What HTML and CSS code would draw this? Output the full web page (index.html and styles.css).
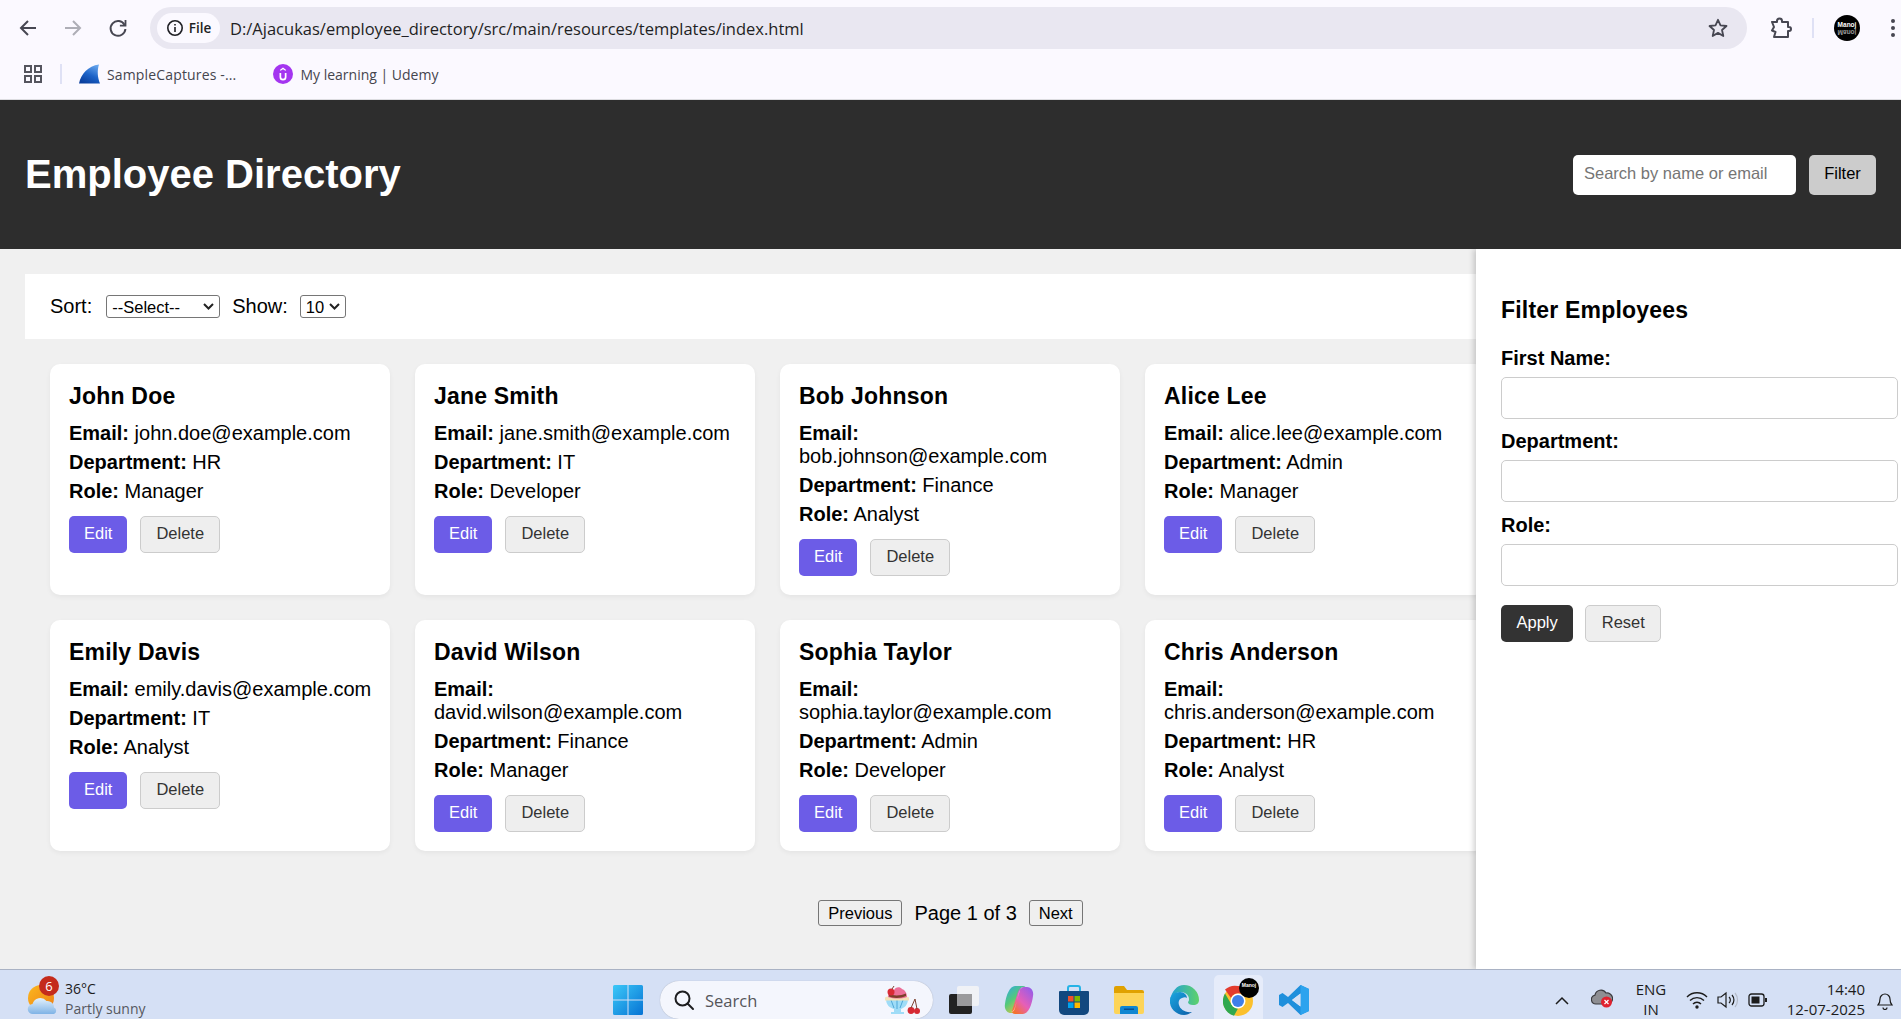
FILE: index.html
```html
<!DOCTYPE html>
<html lang="en">
<head>
  <meta charset="UTF-8">
  <title>Employee Directory</title>
  <link rel="stylesheet" href="styles.css">
</head>
<body>
  <!-- browser toolbar -->
  <div class="browser">
    <div class="nav-row">
      <button class="nav-btn" type="button">
        <svg width="24" height="24" viewBox="0 0 24 24" fill="none" stroke="#474752" stroke-width="2"><path d="M20 12H5M12 5l-7 7 7 7"/></svg>
      </button>
      <button class="nav-btn" type="button">
        <svg width="24" height="24" viewBox="0 0 24 24" fill="none" stroke="#aeaeb6" stroke-width="2"><path d="M4 12h15M12 5l7 7-7 7"/></svg>
      </button>
      <button class="nav-btn" type="button">
        <svg width="24" height="24" viewBox="0 0 24 24" fill="none" stroke="#474752" stroke-width="2"><path d="M18.6 9A7.4 7.4 0 1 0 19.4 13"/><path d="M19.5 4v5.6h-5.6" stroke-width="1.8"/></svg>
      </button>
      <div class="omnibox">
        <span class="site-chip">
          <svg width="18" height="18" viewBox="0 0 18 18" fill="none" stroke="#1f1f24" stroke-width="1.6"><circle cx="9" cy="9" r="7.2"/><path d="M9 8v5M9 5v1.6"/></svg>
          File
        </span>
        <span class="url">D:/Ajacukas/employee_directory/src/main/resources/templates/index.html</span>
        <svg class="star" width="22" height="22" viewBox="0 0 22 22" fill="none" stroke="#474752" stroke-width="1.8" stroke-linejoin="round"><path d="M11 2.800l2.500 5.600 6 .6-4.500 4 1.300 6-5.300-3.100L5.700 19l1.300-6-4.500-4 6-.6z"/></svg>
      </div>
      <svg class="ext" width="24" height="24" viewBox="0 0 24 24" fill="none" stroke="#474752" stroke-width="2" stroke-linejoin="round"><path d="M4 6h5V5a2.500 2.500 0 0 1 5 0v1h6v5h1a2 2 0 0 1 0 4h-1v6H6l1.500-5L4 14.500 6 11z"/></svg>
      <span class="sep-v"></span>
      <svg class="avatar" width="26" height="26" viewBox="0 0 26 26"><circle cx="13" cy="13" r="13" fill="#000"/><text x="13" y="12" text-anchor="middle" class="avatar-text">Manoj</text><text x="13" y="-14.500" text-anchor="middle" class="avatar-text avatar-flip" transform="scale(1,-1)">Manoj</text></svg>
      <svg class="kebab" width="6" height="20" viewBox="0 0 6 20" fill="#474752"><circle cx="3" cy="3" r="2"/><circle cx="3" cy="10" r="2"/><circle cx="3" cy="17" r="2"/></svg>
    </div>
    <div class="bookmarks">
      <svg class="apps-grid" width="20" height="20" viewBox="0 0 20 20" fill="none" stroke="#55555e" stroke-width="2"><rect x="2" y="2" width="6" height="6"/><rect x="12" y="2" width="6" height="6"/><rect x="2" y="12" width="6" height="6"/><rect x="12" y="12" width="6" height="6"/></svg>
      <span class="sep-b"></span>
      <span class="bookmark bookmark-first">
        <svg width="21" height="20" viewBox="0 0 21 20"><defs><linearGradient id="fin" x1="0.8" y1="0" x2="0.3" y2="1"><stop offset="0" stop-color="#6aa8ee"/><stop offset=".55" stop-color="#1c63c8"/><stop offset="1" stop-color="#0a3f9e"/></linearGradient></defs><path d="M0 19.500C2 10 9 2 20 .5c-2 6-1.500 13 1 19z" fill="url(#fin)"/></svg>
        SampleCaptures -...
      </span>
      <span class="bookmark bookmark-second">
        <svg width="20" height="20" viewBox="0 0 20 20"><circle cx="10" cy="10" r="10" fill="#a435f0"/><path d="M6.500 9v4a3.500 3.500 0 0 0 7 0V9h-1.700v4a1.800 1.800 0 0 1-3.600 0V9zM10 3.500L6.800 6l.8.8L10 5.200l2.400 1.600.8-.8z" fill="#fff"/></svg>
        My learning | Udemy
      </span>
    </div>
  </div>

  <header class="page-header">
    <h1>Employee Directory</h1>
    <div class="header-search">
      <input class="search-input" type="text" placeholder="Search by name or email">
      <button class="filter-btn" type="button">Filter</button>
    </div>
  </header>

  <main class="main">
    <div class="toolbar">
      <label for="sortBy">Sort:</label>
      <select id="sortBy" class="sort-select"><option>--Select--</option></select>
      <label for="pageSize">Show:</label>
      <select id="pageSize" class="size-select"><option>10</option></select>
    </div>

    <div class="card-grid">
      <div class="card">
        <h3>John Doe</h3>
        <p><b>Email:</b> john.doe@example.com</p>
        <p><b>Department:</b> HR</p>
        <p><b>Role:</b> Manager</p>
        <div class="card-actions"><button class="btn-edit" type="button">Edit</button><button class="btn-plain" type="button">Delete</button></div>
      </div>
      <div class="card">
        <h3>Jane Smith</h3>
        <p><b>Email:</b> jane.smith@example.com</p>
        <p><b>Department:</b> IT</p>
        <p><b>Role:</b> Developer</p>
        <div class="card-actions"><button class="btn-edit" type="button">Edit</button><button class="btn-plain" type="button">Delete</button></div>
      </div>
      <div class="card">
        <h3>Bob Johnson</h3>
        <p><b>Email:</b> bob.johnson@example.com</p>
        <p><b>Department:</b> Finance</p>
        <p><b>Role:</b> Analyst</p>
        <div class="card-actions"><button class="btn-edit" type="button">Edit</button><button class="btn-plain" type="button">Delete</button></div>
      </div>
      <div class="card">
        <h3>Alice Lee</h3>
        <p><b>Email:</b> alice.lee@example.com</p>
        <p><b>Department:</b> Admin</p>
        <p><b>Role:</b> Manager</p>
        <div class="card-actions"><button class="btn-edit" type="button">Edit</button><button class="btn-plain" type="button">Delete</button></div>
      </div>
      <div class="card">
        <h3>Emily Davis</h3>
        <p><b>Email:</b> emily.davis@example.com</p>
        <p><b>Department:</b> IT</p>
        <p><b>Role:</b> Analyst</p>
        <div class="card-actions"><button class="btn-edit" type="button">Edit</button><button class="btn-plain" type="button">Delete</button></div>
      </div>
      <div class="card">
        <h3>David Wilson</h3>
        <p><b>Email:</b> david.wilson@example.com</p>
        <p><b>Department:</b> Finance</p>
        <p><b>Role:</b> Manager</p>
        <div class="card-actions"><button class="btn-edit" type="button">Edit</button><button class="btn-plain" type="button">Delete</button></div>
      </div>
      <div class="card">
        <h3>Sophia Taylor</h3>
        <p><b>Email:</b> sophia.taylor@example.com</p>
        <p><b>Department:</b> Admin</p>
        <p><b>Role:</b> Developer</p>
        <div class="card-actions"><button class="btn-edit" type="button">Edit</button><button class="btn-plain" type="button">Delete</button></div>
      </div>
      <div class="card">
        <h3>Chris Anderson</h3>
        <p><b>Email:</b> chris.anderson@example.com</p>
        <p><b>Department:</b> HR</p>
        <p><b>Role:</b> Analyst</p>
        <div class="card-actions"><button class="btn-edit" type="button">Edit</button><button class="btn-plain" type="button">Delete</button></div>
      </div>
    </div>

    <div class="pagination">
      <button class="page-btn" type="button">Previous</button>
      <span>Page 1 of 3</span>
      <button class="page-btn" type="button">Next</button>
    </div>

    <!-- filter panel sits over the card grid -->
    <aside class="filter-panel">
      <h3>Filter Employees</h3>
      <label class="field-label" for="firstName">First Name:</label>
      <input class="field-input" id="firstName" type="text">
      <label class="field-label" for="department">Department:</label>
      <input class="field-input" id="department" type="text">
      <label class="field-label" for="role">Role:</label>
      <input class="field-input" id="role" type="text">
      <div class="panel-actions">
        <button class="btn-apply" type="button">Apply</button>
        <button class="btn-plain" type="button">Reset</button>
      </div>
    </aside>
  </main>

  <!-- windows taskbar -->
  <footer class="taskbar">
    <div class="weather">
      <div class="weather-icon">
        <svg width="34" height="34" viewBox="0 0 34 34"><defs><linearGradient id="sun" x1="0" y1="0" x2="1" y2="1"><stop offset="0" stop-color="#fbb81f"/><stop offset="1" stop-color="#ee7e16"/></linearGradient><linearGradient id="cloud" x1="0" y1="0" x2="0" y2="1"><stop offset="0" stop-color="#e4f1fc"/><stop offset="1" stop-color="#7fb3e6"/></linearGradient></defs><circle cx="15" cy="16" r="13" fill="url(#sun)"/><path d="M7 32a5 5 0 0 1-.5-10 8 8 0 0 1 14-3 6.500 6.500 0 0 1 7.500 6.500A3.500 3.500 0 0 1 28 32z" fill="url(#cloud)"/></svg>
        <span class="badge">6</span>
      </div>
      <div class="weather-text">
        <div class="temp">36°C</div>
        <div class="sky">Partly sunny</div>
      </div>
    </div>

    <svg class="win-logo" width="30" height="30" viewBox="0 0 30 30"><defs><linearGradient id="win" x1="0" y1="0" x2="1" y2="1"><stop offset="0" stop-color="#3cc8f8"/><stop offset="1" stop-color="#0673d4"/></linearGradient></defs><path d="M0 1.500A1.500 1.500 0 0 1 1.500 0h13v14.500H0zM15.500 0h13A1.500 1.500 0 0 1 30 1.500v13H15.500zM0 15.500h14.500V30h-13A1.500 1.500 0 0 1 0 28.500zM15.500 15.500H30v13a1.500 1.500 0 0 1-1.500 1.500h-13z" fill="url(#win)"/></svg>

    <div class="task-search">
      <svg width="22" height="22" viewBox="0 0 22 22" fill="none" stroke="#1d1d1f" stroke-width="2"><circle cx="9.500" cy="9.500" r="7"/><path d="M14.500 14.500l5.500 5.500" stroke-linecap="round"/></svg>
      <span class="task-search-text">Search</span>
      <svg class="sundae" width="35" height="28" viewBox="0 0 35 28"><path d="M1 13h22c0 6-4 9-7 10v3h3v2H6v-2h3v-3C5 22 1 19 1 13z" fill="#9fdcf7"/><path d="M6 14l3 8M12 14v9M18 14l-3 8" stroke="#4fa8d8" stroke-width="1"/><path d="M0 11.500c2-2 22-2 24 0v3H0z" fill="#f3e2b8"/><path d="M3 11C3 6 7 5 9 4c1-3 6-4 8-1 3 1 5 4 5 8-6 2-13 2-19 0z" fill="#ec6f98"/><path d="M4 8c4 2 12 2 17-.5v2.500c-5 2.500-13 2.500-17 .5z" fill="#7c3f2a"/><circle cx="6" cy="6" r="3.500" fill="#d92b35"/><path d="M7 3l2-3" stroke="#7e4030" stroke-width="1"/><circle cx="26" cy="24.500" r="3.400" fill="#d62a33"/><circle cx="32" cy="25" r="3" fill="#d62a33"/><path d="M26 22l4-9 2 10" fill="none" stroke="#7e4030" stroke-width="1"/></svg>
    </div>

    <div class="task-apps">
      <span class="task-app">
        <svg width="30" height="28" viewBox="0 0 30 28"><rect x="0" y="8" width="23" height="20" rx="2" fill="#222"/><rect x="8" y="0" width="22" height="20" rx="2" fill="#f4f4f6" fill-opacity=".85"/><rect x="8" y="8" width="15" height="12" fill="#9a9a9c"/></svg>
      </span>
      <span class="task-app">
        <svg width="30" height="28" viewBox="0 0 30 28"><defs><linearGradient id="cp1" x1="0" y1="0" x2=".7" y2="1"><stop offset="0" stop-color="#2ea8e8"/><stop offset=".5" stop-color="#54c97a"/><stop offset="1" stop-color="#f2c53c"/></linearGradient><linearGradient id="cp2" x1="1" y1="0" x2=".2" y2="1"><stop offset="0" stop-color="#8a5cf0"/><stop offset=".6" stop-color="#e65fb8"/><stop offset="1" stop-color="#f5732c"/></linearGradient></defs><path d="M11 0h8c2 0 3 1 3 3l-6 19c-1 3-3 5-6 5H7c-4 0-7-4-6-9C2 9 6 0 11 0z" fill="url(#cp1)"/><path d="M19 28h-8c-2 0-3-1-3-3l6-19c1-3 3-5 6-5h3c4 0 7 4 6 9-1 9-5 18-10 18z" fill="url(#cp2)"/><path d="M15 6c1-3 3-5 5-5-2 0-3 .5-4 3l-5 17c-1 3-2 4-4 5 2 0 3-1 4-4z" fill="#fff" fill-opacity=".65"/></svg>
      </span>
      <span class="task-app">
        <svg width="30" height="30" viewBox="0 0 30 30"><path d="M9 6V3a2 2 0 0 1 2-2h8a2 2 0 0 1 2 2v3" fill="none" stroke="#27b3e6" stroke-width="2"/><path d="M0 7a1 1 0 0 1 1-1h28a1 1 0 0 1 1 1v18a5 5 0 0 1-5 5H5a5 5 0 0 1-5-5z" fill="#12487f"/><rect x="9" y="11" width="5.500" height="5.500" fill="#f1512b"/><rect x="15.500" y="11" width="5.500" height="5.500" fill="#7fba00"/><rect x="9" y="17.500" width="5.500" height="5.500" fill="#00a4ef"/><rect x="15.500" y="17.500" width="5.500" height="5.500" fill="#ffb900"/></svg>
      </span>
      <span class="task-app">
        <svg width="30" height="28" viewBox="0 0 30 28"><path d="M0 2a2 2 0 0 1 2-2h8l3 4h15a2 2 0 0 1 2 2v4H0z" fill="#e0a100"/><path d="M0 7h30v19a2 2 0 0 1-2 2H2a2 2 0 0 1-2-2z" fill="#fdd458"/><path d="M6 28v-6a2 2 0 0 1 2-2h14a2 2 0 0 1 2 2v6z" fill="#0f86d2"/><rect x="10" y="22.500" width="10" height="1.500" fill="#0a4f8f"/></svg>
      </span>
      <span class="task-app">
        <svg width="30" height="30" viewBox="0 0 30 30"><defs><linearGradient id="ed1" x1="0" y1="0" x2="1" y2="1"><stop offset="0" stop-color="#1ba7e0"/><stop offset="1" stop-color="#0b5da8"/></linearGradient><linearGradient id="ed2" x1="0" y1="0" x2="1" y2="0"><stop offset="0" stop-color="#1f9fd9"/><stop offset="1" stop-color="#5fd26a"/></linearGradient></defs><path d="M15 0a15 15 0 0 1 15 15c0 3-2 5-6 5-3 0-5-1-5-3 1-1 1-2 1-3 0-4-4-7-8-7-5 0-9 3-11 8C3 6 8 0 15 0z" fill="url(#ed2)"/><path d="M1 15c0-5 5-8 10-8 4 0 7 3 7 6-1-1-3-1-5 0-3 1-4 4-3 7 1 4 6 8 13 7-3 2-5 3-8 3C7 30 0 23 1 15z" fill="url(#ed1)"/></svg>
      </span>
      <span class="task-app task-app-on">
        <svg width="32" height="32" viewBox="0 0 32 32"><circle cx="15" cy="17" r="15" fill="#fbc02d"/><path d="M15 2a15 15 0 0 1 13 7.500H15a7.500 7.500 0 0 0-7 4.500L2 5.500A15 15 0 0 1 15 2z" fill="#e33b2e"/><path d="M2 9.500L8.500 20.500a7.500 7.500 0 0 0 6.500 4l-4 7.200A15 15 0 0 1 2 9.500z" fill="#2fa84f"/><circle cx="15" cy="17" r="7.500" fill="#fff"/><circle cx="15" cy="17" r="6" fill="#3f7fe8"/></svg>
        <svg class="chrome-profile" width="20" height="20" viewBox="0 0 20 20"><circle cx="10" cy="10" r="10" fill="#000"/><text x="10" y="9" text-anchor="middle" class="profile-text">Manoj</text></svg>
      </span>
      <span class="task-app">
        <svg width="30" height="30" viewBox="0 0 30 30"><path d="M21.500 0L30 4v22l-8.500 4L9 18l-5.500 4L0 20v-10l3.500-2L9 12zM21.500 8.500L13 15l8.500 6.500z" fill="#1f8fdc"/><path d="M21.500 0L30 4v22l-8.500 4z" fill="#2ca3ee"/><path d="M21.500 8.500L13 15l8.500 6.500z" fill="#d5e0f5"/></svg>
      </span>
    </div>

    <div class="tray">
      <svg class="tray-chevron" width="14" height="9" viewBox="0 0 14 9" fill="none" stroke="#1c1c1c" stroke-width="1.500"><path d="M1 8l6-6 6 6"/></svg>
      <span class="tray-cloud">
        <svg width="22" height="20" viewBox="0 0 22 20"><path d="M5 16a4.500 4.500 0 0 1-1-8.900A6 6 0 0 1 15 5a5 5 0 0 1 2 11z" fill="#8e8e92" stroke="#3a3a3e" stroke-width="1.200"/><circle cx="15.500" cy="14" r="5.500" fill="#e0222f"/><path d="M13.500 12l4 4M17.500 12l-4 4" stroke="#fff" stroke-width="1.200"/></svg>
      </span>
      <div class="tray-lang"><div>ENG</div><div>IN</div></div>
      <svg class="tray-wifi" width="22" height="18" viewBox="0 0 22 18" fill="none" stroke="#1c1c1c" stroke-width="1.400"><path d="M1 6a14 14 0 0 1 20 0M4 9.500a10 10 0 0 1 14 0M7 13a5.500 5.500 0 0 1 8 0"/><circle cx="11" cy="16" r="1" fill="#1c1c1c"/></svg>
      <svg class="tray-sound" width="22" height="18" viewBox="0 0 22 18" fill="none" stroke="#1c1c1c" stroke-width="1.200"><path d="M1 6h3l5-4v14l-5-4H1z"/><path d="M12 6a4 4 0 0 1 0 6"/><path d="M15 4a7.500 7.500 0 0 1 0 10"/><path d="M18 2a11 11 0 0 1 0 14" stroke="#b5bbc8"/></svg>
      <svg class="tray-battery" width="20" height="14" viewBox="0 0 20 14" fill="none"><rect x="1" y="1" width="15" height="12" rx="2.500" stroke="#1c1c1c" stroke-width="1.300"/><rect x="3.500" y="3.500" width="8" height="7" fill="#1c1c1c"/><rect x="17" y="5" width="2" height="4" fill="#1c1c1c"/></svg>
      <div class="tray-clock"><div>14:40</div><div>12-07-2025</div></div>
      <svg class="tray-bell" width="16" height="20" viewBox="0 0 16 20" fill="none" stroke="#1c1c1c" stroke-width="1.200"><path d="M1 15c1.500-1.500 2-3 2-6a5 5 0 0 1 10 0c0 3 .5 4.500 2 6z"/><path d="M6 17.500a2 2 0 0 0 4 0"/></svg>
    </div>
  </footer>
</body>
</html>
```

FILE: styles.css
```css
* {
  box-sizing: border-box;
}

html, body {
  height: 100%;
}

body {
  margin: 0;
  display: flex;
  flex-direction: column;
  overflow: hidden;
  font-family: "Liberation Sans", Arial, sans-serif;
  font-size: 20px;
  color: #000;
  background: #f0f0f0;
}

/* browser toolbar */
.browser {
  height: 100px;
  flex: none;
  background: #fbf9ff;
  border-bottom: 1px solid #dcdce0;
  font-family: "Open Sans", sans-serif;
}

.nav-row {
  height: 56px;
  display: flex;
  align-items: center;
  padding-left: 5px;
}

.nav-btn {
  width: 45px;
  height: 36px;
  padding: 0;
  border: none;
  background: none;
  display: flex;
  align-items: center;
  justify-content: center;
}

.omnibox {
  width: 1597px;
  height: 42px;
  margin-left: 10px;
  padding: 0 18px 0 7px;
  display: flex;
  align-items: center;
  background: #e9e7f1;
  border-radius: 21px;
}

.site-chip {
  width: 63px;
  height: 30px;
  display: flex;
  align-items: center;
  justify-content: center;
  gap: 5px;
  background: #fbf9ff;
  border-radius: 15px;
  font-size: 13.5px;
  font-weight: 600;
  color: #1f1f24;
}

.url {
  flex: 1;
  margin-left: 10px;
  font-size: 16.5px;
  color: #1f1f24;
}

.ext {
  margin-left: 21px;
}

.sep-v {
  width: 2px;
  height: 20px;
  margin-left: 20px;
  background: #dfe1f5;
}

.avatar {
  margin-left: 20px;
}

.avatar-text {
  font: bold 6.5px "Liberation Sans", sans-serif;
  fill: #fff;
}

.avatar-flip {
  fill: #999;
}

.kebab {
  margin-left: 30px;
}

.bookmarks {
  height: 43px;
  display: flex;
  align-items: center;
  padding: 0 0 7px 23px;
  font-size: 14px;
  color: #45454e;
}

.sep-b {
  width: 2px;
  height: 20px;
  margin-left: 17px;
  background: #dfe1f5;
}

.bookmark {
  display: flex;
  align-items: center;
  gap: 7px;
}

.bookmark-first {
  margin-left: 17px;
  letter-spacing: 0.15px;
}

.bookmark-second {
  margin-left: 37px;
}

/* page header */
.page-header {
  height: 149px;
  flex: none;
  display: flex;
  align-items: center;
  justify-content: space-between;
  padding: 0 25px;
  background: #2d2d2d;
  color: #fff;
}

.page-header h1 {
  margin: 0;
  font-size: 40px;
  font-weight: bold;
}

.header-search {
  display: flex;
  gap: 13px;
}

.search-input {
  width: 223px;
  height: 40px;
  padding: 0 11px 2px;
  border: none;
  border-radius: 5px;
  font: 16.5px "Liberation Sans", sans-serif;
}

.search-input::placeholder {
  color: #757575;
}

.filter-btn {
  width: 67px;
  height: 40px;
  padding: 0 0 2px;
  border: none;
  border-radius: 5px;
  background: #ccc;
  color: #000;
  font: 16.5px "Liberation Sans", sans-serif;
}

/* main area */
.main {
  flex: 1;
  min-height: 0;
  position: relative;
  overflow: hidden;
  padding: 25px;
}

.toolbar {
  height: 65px;
  display: flex;
  align-items: center;
  padding: 0 25px;
  background: #fff;
}

.sort-select,
.size-select {
  appearance: none;
  height: 23px;
  padding: 0 0 0 5px;
  font: 16.5px "Liberation Sans", sans-serif;
  color: #000;
  border: 1px solid #767676;
  border-radius: 3px;
  background: #fff url("data:image/svg+xml,%3Csvg xmlns='http://www.w3.org/2000/svg' width='11' height='7'%3E%3Cpath d='M1 1l4.500 4.500L10 1' fill='none' stroke='%23222' stroke-width='2'/%3E%3C/svg%3E") no-repeat right 5px center;
}

.sort-select {
  width: 114px;
  margin: 0 12px 0 14px;
}

.size-select {
  width: 46px;
  margin-left: 12px;
}

.card-grid {
  display: grid;
  grid-template-columns: repeat(4, 340px);
  grid-auto-rows: 231px;
  gap: 25px;
  margin: 25px 0 0 25px;
}

.card {
  padding: 19px 12px 19px 19px;
  background: #fff;
  border-radius: 10px;
  box-shadow: 0 2px 5px rgba(0,0,0,0.05);
}

.card h3 {
  margin: 0 0 12px;
  font-size: 23px;
  letter-spacing: 0.2px;
}

.card p {
  margin: 6px 0;
}

.card-actions {
  display: flex;
  gap: 13px;
  margin-top: 13px;
}

.btn-edit,
.btn-plain,
.btn-apply {
  height: 37px;
  padding: 0 15px 2px;
  border-radius: 5px;
  font: 16.5px "Liberation Sans", sans-serif;
}

.btn-edit {
  border: none;
  background: #6c5ce7;
  color: #fff;
}

.btn-plain {
  border: 1px solid #ccc;
  background: #eee;
  color: #333;
}

.btn-apply {
  border: none;
  background: #333;
  color: #fff;
}

.pagination {
  display: flex;
  justify-content: center;
  align-items: center;
  gap: 12px;
  margin-top: 49px;
}

.page-btn {
  height: 26px;
  padding: 0 9px;
  background: #efefef;
  border: 1px solid #767676;
  border-radius: 3px;
  color: #000;
  font: 16.5px "Liberation Sans", sans-serif;
}

/* filter panel */
.filter-panel {
  position: absolute;
  top: 0;
  right: 0;
  bottom: 0;
  width: 425px;
  padding: 48px 25px 0;
  background: #fff;
  box-shadow: -2px 0 6px rgba(0,0,0,0.2);
}

.filter-panel h3 {
  margin: 0 0 23px;
  font-size: 23px;
  letter-spacing: 0.2px;
}

.field-label {
  display: block;
  margin-bottom: 7px;
  font-weight: bold;
}

.field-input {
  display: block;
  width: 397px;
  height: 42px;
  margin-bottom: 11.4px;
  border: 1px solid #ccc;
  border-radius: 5px;
}

.panel-actions {
  display: flex;
  gap: 12px;
  margin-top: 19.5px;
}

.panel-actions button {
  padding: 0 15.5px 2px;
}

/* windows taskbar */
.taskbar {
  height: 50px;
  flex: none;
  display: flex;
  align-items: center;
  padding-top: 11px;
  background: #d5e0f5;
  border-top: 1px solid #a9b2c4;
  font-family: "Open Sans", sans-serif;
  color: #1c1c1c;
}

.weather {
  width: 613px;
  padding-left: 26px;
  display: flex;
  align-items: center;
  gap: 3px;
}

.weather-icon {
  position: relative;
  width: 36px;
  height: 34px;
  margin-top: -3px;
}

.badge {
  position: absolute;
  top: -6px;
  left: 13px;
  width: 20px;
  height: 20px;
  border-radius: 50%;
  background: #c42b1c;
  color: #fff;
  font-size: 13px;
  line-height: 20px;
  text-align: center;
}

.weather-text {
  margin-top: -2px;
}

.temp {
  font-size: 14px;
  line-height: 20px;
}

.sky {
  font-size: 14px;
  line-height: 20px;
  color: #55585f;
}

.win-logo {
  flex: none;
}

.task-search {
  position: relative;
  width: 273px;
  height: 38px;
  margin-left: 17px;
  padding-left: 13px;
  display: flex;
  align-items: center;
  gap: 10px;
  background: #f4f6fd;
  border-radius: 19px;
  box-shadow: 0 0 1px rgba(0,0,0,0.3);
}

.task-search-text {
  font-size: 16.5px;
  color: #55555a;
}

.sundae {
  margin-left: auto;
  margin-right: 13px;
}

.task-apps {
  display: flex;
  margin-left: 3px;
}

.task-app {
  position: relative;
  width: 55px;
  height: 30px;
  display: flex;
  align-items: center;
  justify-content: center;
}

.task-app-on {
  width: 49px;
  margin: 0 3px;
}

/* highlight behind the running app, taller than its slot */
.task-app-on::before {
  content: "";
  position: absolute;
  top: -10px;
  left: 0;
  right: 0;
  bottom: -5px;
  background: #e6ecfa;
  border-radius: 5px 5px 0 0;
}

.task-app-on svg {
  position: relative;
}

.task-app-on .chrome-profile {
  position: absolute;
  top: -7px;
  right: 4px;
}

.profile-text {
  font: bold 5px "Liberation Sans", sans-serif;
  fill: #fff;
}

.tray {
  flex: 1;
  display: flex;
  align-items: center;
  padding-left: 234px;
}

.tray-cloud {
  margin-left: 22px;
}

.tray-lang {
  width: 46px;
  margin-top: -2px;
  margin-left: 15px;
  font-size: 15px;
  line-height: 20px;
  text-align: center;
}

.tray-wifi {
  margin-left: 12px;
}

.tray-sound {
  margin-left: 9px;
}

.tray-battery {
  margin-left: 9px;
}

.tray-clock {
  width: 90px;
  margin-top: -2px;
  margin-left: 7px;
  font-size: 15px;
  line-height: 20px;
  text-align: right;
}

.tray-bell {
  margin-left: 12px;
}
```
